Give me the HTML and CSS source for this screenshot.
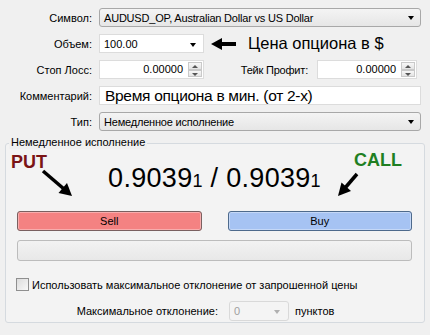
FILE: index.html
```html
<!DOCTYPE html>
<html lang="ru">
<head>
  <meta charset="UTF-8" />
  <title>Ордер</title>
  <link rel="stylesheet" href="styles.css">
</head>
<body>

<div class="order">
  <div class="row">
    <span class="label">Символ:</span>
    <div class="combo wide"><span>AUDUSD_OP, Australian Dollar vs US Dollar</span><i class="caret"></i></div>
  </div>

  <div class="row">
    <span class="label">Объем:</span>
    <div class="field volume"><span>100.00</span><i class="caret"></i></div>
    <svg class="hint-arrow" width="25" height="14" viewBox="0 0 25 14">
      <polygon points="0,7 11,1 11,13" fill="#000"/>
      <rect x="9" y="5" width="16" height="4" fill="#000"/>
    </svg>
    <span class="hint">Цена опциона в $</span>
  </div>

  <div class="row">
    <span class="label">Стоп Лосс:</span>
    <div class="spin sl">
      <span class="spin-value">0.00000</span>
      <span class="spin-btns"><b class="up"></b><b class="down"></b></span>
    </div>
    <span class="label tp-label">Тейк Профит:</span>
    <div class="spin tp">
      <span class="spin-value">0.00000</span>
      <span class="spin-btns"><b class="up"></b><b class="down"></b></span>
    </div>
  </div>

  <div class="row">
    <span class="label">Комментарий:</span>
    <div class="field comment">Время опциона в мин. (от 2-х)</div>
  </div>

  <div class="row">
    <span class="label">Тип:</span>
    <div class="combo wide"><span>Немедленное исполнение</span><i class="caret"></i></div>
  </div>
</div>

<!-- Немедленное исполнение -->
<div class="group">
  <span class="group-title">Немедленное исполнение</span>
  <span class="tag put">PUT</span>
  <span class="tag call">CALL</span>
  <svg class="marks" width="420" height="180">
    <line x1="37" y1="27" x2="58" y2="45" stroke="#000" stroke-width="3.5"/>
    <polygon points="66,52 52.5,49 61,39" fill="#000"/>
    <line x1="351" y1="30" x2="339" y2="44" stroke="#000" stroke-width="3.5"/>
    <polygon points="332,52 345,47 335.5,38.5" fill="#000"/>
  </svg>

  <div class="quote">0.9039<small>1</small> / 0.9039<small>1</small></div>

  <div class="trade">
    <button class="btn sell">Sell</button>
    <button class="btn buy">Buy</button>
  </div>

  <div class="progress"></div>

  <label class="check"><span class="box"></span>Использовать максимальное отклонение от запрошенной цены</label>

  <div class="deviation">
    <span class="dev-label">Максимальное отклонение:</span>
    <div class="combo small disabled"><span>0</span><i class="caret"></i></div>
    <span>пунктов</span>
  </div>
</div>

</body>
</html>
```

FILE: styles.css
```css
* {
  box-sizing: border-box;
}

body {
  margin: 0;
  background: #f0f0f0;
  font-family: "Liberation Sans", Arial, sans-serif;
  font-size: 11px;
  color: #000;
  width: 430px;
  height: 335px;
  overflow: hidden;
}

.order {
  padding-top: 8px;
}

.row {
  display: flex;
  align-items: center;
  height: 19px;
  margin-bottom: 7px;
}

.label {
  width: 92px;
  margin-right: 7px;
  text-align: right;
  white-space: nowrap;
}

/* поля и списки */
.combo {
  position: relative;
  display: flex;
  align-items: center;
  height: 19px;
  padding: 0 20px 0 4px;
  border: 1px solid #a8a8a8;
  border-radius: 3px;
  background: linear-gradient(#f4f4f4, #e6e6e6);
  white-space: nowrap;
  letter-spacing: -0.2px;
}

.combo.wide {
  width: 322px;
}

.caret {
  position: absolute;
  right: 6px;
  top: 7px;
  width: 0;
  height: 0;
  border-top: 4px solid #000;
  border-left: 3.5px solid transparent;
  border-right: 3.5px solid transparent;
}

.field {
  position: relative;
  display: flex;
  align-items: center;
  height: 19px;
  padding: 0 4px;
  background: #fff;
  border: 1px solid #dcdcdc;
  white-space: nowrap;
}

.field.volume {
  width: 105px;
}

.field.volume .caret {
  right: 7px;
  top: 8px;
}

.field.comment {
  width: 322px;
  font-size: 15.5px;
  line-height: 17px;
  padding-left: 5px;
  letter-spacing: -0.3px;
}

.hint-arrow {
  margin-left: 7px;
}

.hint {
  margin-left: 12px;
  font-size: 16.5px;
  line-height: 19px;
  white-space: nowrap;
}

.spin {
  display: flex;
  height: 19px;
  background: #fff;
  border: 1px solid #dcdcdc;
}

.spin.sl {
  width: 105px;
}

.spin.tp {
  width: 100px;
}

.spin-value {
  flex: 1;
  text-align: right;
  padding-right: 5px;
  line-height: 17px;
}

.spin-btns {
  display: flex;
  flex-direction: column;
  width: 15px;
  padding: 1px 1px 1px 0;
}

.spin-btns b {
  position: relative;
  flex: 1;
  border: 1px solid #c9c9c9;
  background: linear-gradient(#f7f7f7, #e4e4e4);
}

.spin-btns b::after {
  content: "";
  position: absolute;
  left: 3px;
  top: 2px;
  border-left: 3px solid transparent;
  border-right: 3px solid transparent;
}

.spin-btns .up::after {
  border-bottom: 3px solid #555;
}

.spin-btns .down::after {
  border-top: 3px solid #555;
}

.tp-label {
  width: 104px;
  margin-right: 9px;
  letter-spacing: -0.2px;
}

/* группа исполнения */
.group {
  position: relative;
  margin: 12px 5px 0;
  height: 180px;
  padding: 18px 12px 0 11px;
  border: 1px solid #d5dadf;
  border-radius: 3px;
  background: #f3f3f3;
}

.group-title {
  position: absolute;
  left: 3px;
  top: -8px;
  padding: 0 2px;
  background: #f0f0f0;
  line-height: 13px;
}

.tag {
  position: absolute;
  font-size: 18px;
  font-weight: bold;
  line-height: 18px;
}

.put {
  left: 5px;
  top: 9px;
  color: #7b1416;
}

.call {
  left: 348px;
  top: 7px;
  color: #1f7f22;
}

.marks {
  position: absolute;
  left: 0;
  top: 0;
  pointer-events: none;
}

.quote {
  text-align: center;
  font-size: 27px;
  line-height: 32px;
  letter-spacing: 0.3px;
}

.quote small {
  font-size: 18px;
}

.trade {
  display: flex;
  gap: 26px;
  margin-top: 14px;
}

.btn {
  flex: 1;
  height: 20px;
  padding: 0;
  font-family: inherit;
  font-size: 11px;
  color: #000;
  border-radius: 3px;
  box-shadow: inset 0 0 0 1px rgba(255,255,255,0.35);
}

.sell {
  background: #f48282;
  border: 1px solid #7a6060;
}

.buy {
  background: #a6c3f3;
  border: 1px solid #4e6a8c;
}

.progress {
  height: 21px;
  margin-top: 9px;
  border: 1px solid #bcbcbc;
  border-radius: 3px;
  background: linear-gradient(#f2f2f2, #e8e8e8);
}

.check {
  display: flex;
  align-items: center;
  margin: 17px 0 0 -1px;
  height: 13px;
}

.box {
  width: 13px;
  height: 13px;
  margin-right: 3px;
  border: 1px solid #8f8f8f;
  background: linear-gradient(135deg, #dcdcdc, #f8f8f8);
}

.deviation {
  display: flex;
  align-items: center;
  margin-top: 10px;
}

.dev-label {
  width: 201px;
  text-align: right;
  margin-right: 11px;
}

.combo.small {
  width: 60px;
  height: 20px;
  margin-right: 6px;
}

.combo.disabled {
  color: #a0a0a0;
  border-color: #d9d9d9;
  background: #f4f4f4;
}

.combo.disabled .caret {
  border-top-color: #b0b0b0;
  right: 8px;
  top: 8px;
}
```
